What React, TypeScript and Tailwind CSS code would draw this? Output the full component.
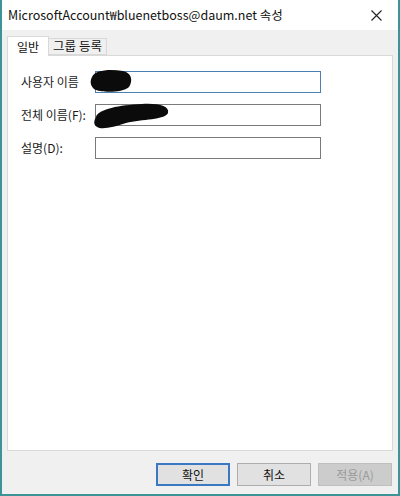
import React from "react";

const font = { fontFamily: '"Noto Sans CJK KR", "Noto Sans", "Liberation Sans", sans-serif' };

function Row({ label, focused, blot }: { label: string; focused?: boolean; blot?: "a" | "b" }) {
  return (
    <div className="flex h-[22px] items-center">
      <div className="w-[87px] pl-[13px] text-[12px] text-[#1a1a1a]">{label}</div>
      <div className="relative">
        {blot === "a" && (
          <svg width="44" height="24" className="absolute left-[-6px] top-[-2px] z-10">
            <path d="M3 8 C6 1 20 0 34 2 C43 4 44 12 40 18 C33 24 12 24 5 20 C1 16 1 12 3 8 Z" fill="#0b0b0b" />
          </svg>
        )}
        {blot === "b" && (
          <svg width="80" height="28" className="absolute left-[-3px] top-[-1px] z-10">
            <path d="M4 14 C6 6 28 2 50 1 C66 0 78 3 76 10 C73 17 50 16 34 20 C22 24 10 27 5 24 C1 21 2 18 4 14 Z" fill="#0b0b0b" />
          </svg>
        )}
        <div className={`h-[22px] w-[226px] bg-white border ${focused ? "border-[#4a7fb0]" : "border-[#7a7a7a]"}`} />
      </div>
    </div>
  );
}

function Btn({ label, primary, disabled }: { label: string; primary?: boolean; disabled?: boolean }) {
  return (
    <div
      className={`flex h-[23px] w-[74px] items-center justify-center text-[12px] ${
        primary
          ? "border-2 border-[#3a79c2] bg-[#e1e1e1] text-[#111]"
          : disabled
          ? "border border-[#bfbfbf] bg-[#cccccc] text-[#9a9a9a]"
          : "border border-[#adadad] bg-[#e1e1e1] text-[#111]"
      }`}
    >
      {label}
    </div>
  );
}

export default function App() {
  return (
    <div style={font} className="flex h-[496px] w-[400px] flex-col border-x-2 border-b-2 border-[#3d9497] bg-[#f0f0f0]">
      <div className="flex h-[30px] items-center justify-between bg-white pl-[6px] pr-[14px]">
        <span className="text-[12.5px] text-[#111]">MicrosoftAccount₩bluenetboss@daum.net 속성</span>
        <svg width="11" height="11" viewBox="0 0 11 11" className="mr-[2px]">
          <path d="M0.5 0.5 L10.5 10.5 M10.5 0.5 L0.5 10.5" stroke="#222" strokeWidth="1.1" />
        </svg>
      </div>

      <div className="flex flex-1 flex-col px-[5px] pt-[6px]">
        <div className="flex items-end">
          <div className="relative z-10 -mb-px flex h-[20px] items-center border border-b-0 border-[#d9d9d9] bg-white px-[9px] text-[12px] text-[#111]">
            일반
          </div>
          <div className="flex h-[17px] items-center border border-l-0 border-[#d9d9d9] bg-[#f0f0f0] px-[4px] text-[12.5px] text-[#111]">
            그룹 등록
          </div>
        </div>
        <div className="flex h-[396px] flex-col gap-[11px] border border-[#d9d9d9] bg-white pt-[15px]">
          <Row label="사용자 이름" focused blot="a" />
          <Row label="전체 이름(F):" blot="b" />
          <Row label="설명(D):" />
        </div>
        <div className="mt-[12px] flex justify-end gap-[7px] pr-[1px]">
          <Btn label="확인" primary />
          <Btn label="취소" />
          <Btn label="적용(A)" disabled />
        </div>
      </div>
    </div>
  );
}
